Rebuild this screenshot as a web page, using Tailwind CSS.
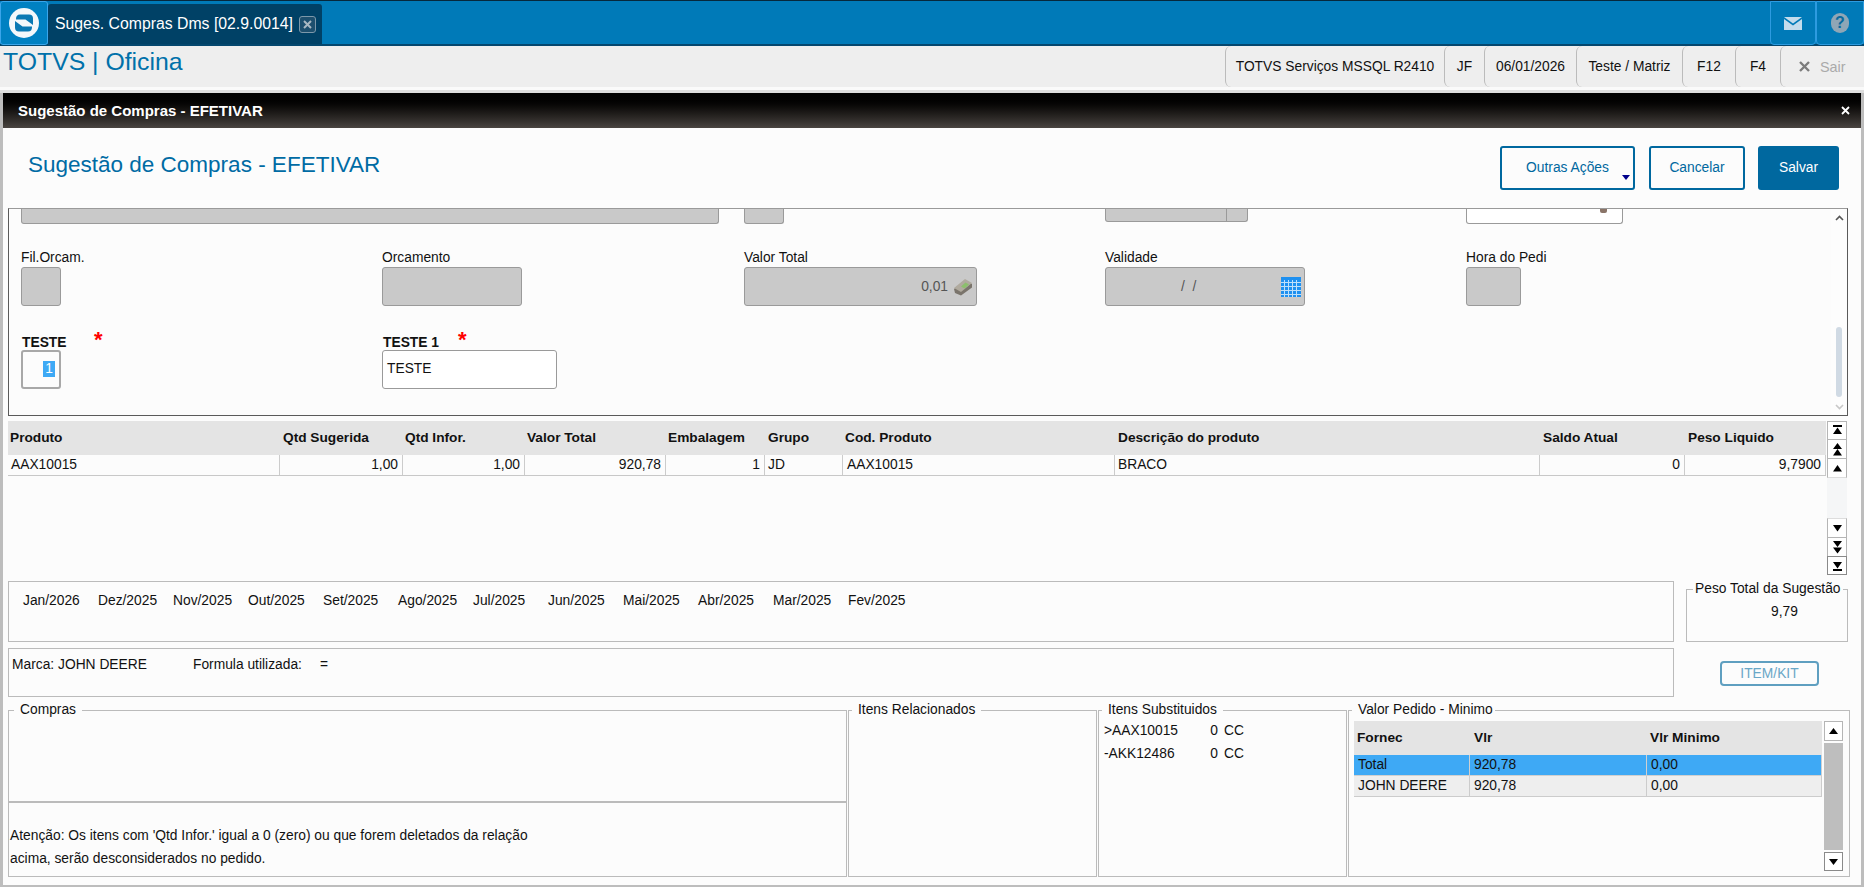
<!DOCTYPE html>
<html lang="pt-BR">
<head>
    <meta charset="UTF-8">
    <title>TOTVS | Oficina</title>
    <script src="https://cdn.jsdelivr.net/npm/@tailwindcss/browser@4"></script>
</head>
<body class="bg-[#bdbdbd] overflow-hidden">
<div class="w-[1864px] h-[887px] flex flex-col overflow-hidden text-[13.8px] leading-[16px] text-[#111] font-['Liberation_Sans',Arial,sans-serif]">

    <!-- Top bar -->
    <div class="h-[46px] shrink-0 flex items-end bg-[#007ab8] border-t border-t-[#06283c] border-b-2 border-b-[#04476e]">
        <div class="w-[48px] h-[44px] -mb-[1px] flex items-center justify-center bg-[#0081c2] border border-[#3aa5ea] rounded-[3px]">
            <svg width="32" height="32" viewBox="0 0 32 32">
                <circle cx="16" cy="16" r="15" fill="#f4f8fb"/>
                <path d="M8 12Q8 7.500 12 7.500L21 7.500Q25 7.500 25 11.500L25 18L17.500 12.500L8 12.500Z" fill="#0a79b4"/>
                <path d="M7 14L14.500 19.500L24 19.500L24 20Q24 24.500 20 24.500L11 24.500Q7 24.500 7 20.500Z" fill="#0a79b4"/>
            </svg>
        </div>
        <div class="w-[274px] h-[40px] flex items-center pl-[7px] bg-[#004166] rounded-t-[3px] text-white text-[15.8px]">
            <span class="whitespace-nowrap">Suges. Compras Dms [02.9.0014]</span>
            <span class="ml-[6px] w-[17px] h-[17px] shrink-0 flex items-center justify-center border border-[#7d98aa] rounded-[3px] bg-[#1d4f6e]">
                <svg width="11" height="11" viewBox="0 0 11 11"><path d="M2 2L9 9M9 2L2 9" stroke="#a9b8c2" stroke-width="2"/></svg>
            </span>
        </div>
        <div class="flex-1"></div>
        <div class="w-[46px] h-[44px] -mb-[1px] flex items-center justify-center bg-[#007ab8] border border-[#2d9be0] rounded-b-[4px]">
            <svg width="18" height="13" viewBox="0 0 18 13"><path d="M0 0H18L9 6.500Z" fill="#c4dcec"/><path d="M0 2L9 8.500L18 2V13H0Z" fill="#c4dcec"/></svg>
        </div>
        <div class="w-[48px] h-[44px] -mb-[1px] flex items-center justify-center bg-[#007ab8] border border-[#2d9be0] rounded-b-[4px]">
            <span class="w-[18px] h-[20px] rounded-full bg-[#8fa6b6] text-[#0a6a9e] font-bold text-[16px] leading-[20px] text-center">?</span>
        </div>
    </div>

    <!-- Toolbar -->
    <div class="h-[41px] shrink-0 flex bg-[#eeeeee]">
        <div class="flex-1 pl-[3px] pt-[2px] text-[24.8px] leading-[28px] text-[#0071aa]">TOTVS | Oficina</div>
        <div class="w-[219px] flex items-center justify-center border-l border-[#bbbbbb] rounded-l-[6px]">TOTVS Serviços MSSQL R2410</div>
        <div class="w-[40px] flex items-center justify-center border-l border-[#bbbbbb] rounded-l-[6px]">JF</div>
        <div class="w-[92px] flex items-center justify-center border-l border-[#bbbbbb] rounded-l-[6px]">06/01/2026</div>
        <div class="w-[106px] flex items-center justify-center border-l border-[#bbbbbb] rounded-l-[6px]">Teste / Matriz</div>
        <div class="w-[53px] flex items-center justify-center border-l border-[#bbbbbb] rounded-l-[6px]">F12</div>
        <div class="w-[45px] flex items-center justify-center border-l border-[#bbbbbb] rounded-l-[6px]">F4</div>
        <div class="w-[84px] flex items-center pl-[18px] gap-[10px] border-l border-[#bbbbbb] rounded-l-[6px] text-[14.4px] text-[#aaaaaa]">
            <svg width="11" height="11" viewBox="0 0 11 11"><path d="M1 1L10 10M10 1L1 10" stroke="#7c7c7c" stroke-width="2.400"/></svg>
            <span>Sair</span>
        </div>
    </div>
    <div class="h-[3px] shrink-0 bg-[#fafafa]"></div>
    <div class="h-[3px] shrink-0 bg-[#dddddd]"></div>

    <!-- Modal -->
    <div class="ml-[3px] w-[1858px] h-[792px] shrink-0 flex flex-col bg-[#fcfcfc]">
        <div class="h-[35px] shrink-0 flex items-center justify-between pl-[15px] pr-[11px] bg-gradient-to-b from-[#000000] to-[#4a4541] text-white font-bold text-[15px]">
            <span>Sugestão de Compras - EFETIVAR</span>
            <svg width="9" height="9" viewBox="0 0 9 9"><path d="M1 1L8 8M8 1L1 8" stroke="#ffffff" stroke-width="1.800"/></svg>
        </div>

        <div class="h-[80px] shrink-0 flex pl-[25px] pt-[18px]">
            <h1 class="flex-1 pt-[6px] text-[22.5px] leading-[26px] text-[#006ba4]">Sugestão de Compras - EFETIVAR</h1>
            <div class="relative w-[135px] h-[44px] flex items-center justify-center border-2 border-[#00689f] rounded-[3px] text-[#00689f]">
                Outras Ações
                <span class="absolute right-[3px] bottom-[8px] w-0 h-0 border-x-[4px] border-x-transparent border-t-[5px] border-t-[#00008b]"></span>
            </div>
            <div class="ml-[14px] w-[96px] h-[44px] flex items-center justify-center border-2 border-[#00689f] rounded-[3px] text-[#00689f]">Cancelar</div>
            <div class="ml-[13px] mr-[22px] w-[81px] h-[44px] flex items-center justify-center bg-[#00689f] rounded-[3px] text-white">Salvar</div>
        </div>

        <!-- Form panel -->
        <div class="ml-[5px] w-[1840px] h-[208px] shrink-0 flex overflow-hidden border border-[#5a5a5a] border-t-[#9a9a9a]">
            <div class="flex-1 pl-[12px]">
                <div class="grid grid-cols-[361px_362px_361px_361px_1fr] h-[15px]">
                    <div class="w-[698px] h-[15px] bg-[#c9c9c9] border-x border-b border-[#9a9a9a] rounded-b-[3px]"></div>
                    <div></div>
                    <div class="w-[40px] h-[15px] bg-[#c9c9c9] border-x border-b border-[#9a9a9a] rounded-b-[3px]"></div>
                    <div class="w-[143px] h-[13px] flex justify-end bg-[#c9c9c9] border-x border-b border-[#9a9a9a] rounded-b-[3px]"><span class="w-[21px] border-l border-[#9a9a9a]"></span></div>
                    <div class="w-[157px] h-[15px] flex justify-end pr-[15px] bg-white border-x border-b border-[#9a9a9a] rounded-b-[3px]">
                        <span class="w-[7px] h-[4px] bg-[#8a7468] rounded-b-[2px]"></span>
                    </div>
                </div>

                <div class="grid grid-cols-[361px_362px_361px_361px_1fr] mt-[26px]">
                    <div>
                        <div class="h-[17px]">Fil.Orcam.</div>
                        <div class="w-[40px] h-[39px] bg-[#c9c9c9] border border-[#9a9a9a] rounded-[3px]"></div>
                    </div>
                    <div>
                        <div class="h-[17px]">Orcamento</div>
                        <div class="w-[140px] h-[39px] bg-[#c9c9c9] border border-[#9a9a9a] rounded-[3px]"></div>
                    </div>
                    <div>
                        <div class="h-[17px]">Valor Total</div>
                        <div class="w-[233px] h-[39px] flex items-center justify-end pr-[3px] gap-[5px] bg-[#c9c9c9] border border-[#9a9a9a] rounded-[3px] text-[#555555]">
                            0,01
                            <svg width="20" height="18" viewBox="0 0 20 18">
                                <path d="M1 11L12 2L19 6L19 9.500L8 17.500L2 15Z" fill="#7a746b"/>
                                <path d="M1 10L12 1L19 5L8 14Z" fill="#b0aa9e"/>
                                <path d="M8 8.500L12.500 4.500L16 6.500L11.500 10.500Z" fill="#8cbf6c"/>
                            </svg>
                        </div>
                    </div>
                    <div>
                        <div class="h-[17px]">Validade</div>
                        <div class="w-[200px] h-[39px] flex items-center pl-[75px] pr-[3px] bg-[#c9c9c9] border border-[#9a9a9a] rounded-[3px] text-[#555555]">
                            <span class="flex-1 whitespace-pre">/  /</span>
                            <svg width="20" height="20" viewBox="0 0 20 20">
                                <rect x="0" y="0" width="20" height="20" fill="#1e90f0"/>
                                <path d="M0 5.500H20M0 9.500H20M0 13.500H20M0 17.500H20M3.500 3V20M7.500 3V20M11.500 3V20M15.500 3V20" stroke="#bfe0fa" stroke-width="1"/>
                            </svg>
                        </div>
                    </div>
                    <div>
                        <div class="h-[17px]">Hora do Pedi</div>
                        <div class="w-[55px] h-[39px] bg-[#c9c9c9] border border-[#9a9a9a] rounded-[3px]"></div>
                    </div>
                </div>

                <div class="grid grid-cols-[361px_1fr] mt-[29px]">
                    <div>
                        <div class="flex h-[15px] font-bold">
                            <span class="w-[73px] pl-[1px]">TESTE</span>
                            <span class="text-[#ff0000] text-[22px] leading-[16px] -mt-[3px]">*</span>
                        </div>
                        <div class="w-[40px] h-[39px] flex items-center justify-end pr-[4px] pb-[1px] bg-[#fcfcfc] border-2 border-[#a8a8a8] rounded-[3px]">
                            <span class="bg-[#3ea9f5] text-white px-[2px]">1</span>
                        </div>
                    </div>
                    <div>
                        <div class="flex h-[15px] font-bold">
                            <span class="w-[76px] pl-[1px]">TESTE 1</span>
                            <span class="text-[#ff0000] text-[22px] leading-[16px] -mt-[3px]">*</span>
                        </div>
                        <div class="w-[175px] h-[39px] flex items-center pl-[4px] pb-[1px] bg-white border border-[#9a9a9a] rounded-[3px]">TESTE</div>
                    </div>
                </div>
            </div>
            <div class="w-[16px] shrink-0 flex flex-col items-center bg-[#fdfdfd]">
                <svg class="mt-[6px]" width="9" height="6" viewBox="0 0 9 6"><path d="M1 5L4.500 1.500L8 5" fill="none" stroke="#555555" stroke-width="1.600"/></svg>
                <div class="mt-[106px] w-[6px] h-[70px] bg-[#d0dae4] rounded-[3px]"></div>
                <svg class="mt-[7px]" width="9" height="6" viewBox="0 0 9 6"><path d="M1 1L4.500 4.500L8 1" fill="none" stroke="#c8c8c8" stroke-width="1.600"/></svg>
            </div>
        </div>

        <!-- Product grid -->
        <div class="ml-[5px] mt-[5px] h-[154px] shrink-0 flex">
            <div class="w-[1818px]">
                <div class="h-[34px] grid grid-cols-[271px_123px_122px_141px_99px_78px_272px_425px_145px_142px] items-center bg-[#e4e4e4] font-bold text-[13.7px]">
                    <span class="pl-[2px]">Produto</span>
                    <span class="pl-[4px]">Qtd Sugerida</span>
                    <span class="pl-[3px]">Qtd Infor.</span>
                    <span class="pl-[3px]">Valor Total</span>
                    <span class="pl-[3px]">Embalagem</span>
                    <span class="pl-[4px]">Grupo</span>
                    <span class="pl-[3px]">Cod. Produto</span>
                    <span class="pl-[4px]">Descrição do produto</span>
                    <span class="pl-[4px]">Saldo Atual</span>
                    <span class="pl-[4px]">Peso Liquido</span>
                </div>
                <div class="h-[21px] grid grid-cols-[272px_123px_122px_141px_99px_78px_272px_425px_145px_141px] items-center bg-[#fcfcfc] border-b border-[#c8c8c8] [&>span]:h-[20px] [&>span]:leading-[20px] [&>span]:border-r [&>span]:border-[#cccccc]">
                    <span class="pl-[3px]">AAX10015</span>
                    <span class="pr-[4px] text-right">1,00</span>
                    <span class="pr-[4px] text-right">1,00</span>
                    <span class="pr-[4px] text-right">920,78</span>
                    <span class="pr-[4px] text-right">1</span>
                    <span class="pl-[3px]">JD</span>
                    <span class="pl-[4px]">AAX10015</span>
                    <span class="pl-[3px]">BRACO</span>
                    <span class="pr-[4px] text-right">0</span>
                    <span class="pr-[4px] text-right">9,7900</span>
                </div>
            </div>
            <div class="ml-[1px] w-[20px] flex flex-col">
                <div class="h-[19px] flex items-center justify-center border border-[#b5b5b5] bg-white">
                    <svg width="11" height="11" viewBox="0 0 11 11"><path d="M1 0H10V2H1ZM5.500 2.500L10 9H1Z" fill="#000"/></svg>
                </div>
                <div class="h-[18px] flex items-center justify-center border-x border-[#b5b5b5] bg-white">
                    <svg width="11" height="13" viewBox="0 0 11 13"><path d="M5.500 0L10 6H1ZM5.500 6L10 12.500H1Z" fill="#000"/></svg>
                </div>
                <div class="h-[20px] flex items-center justify-center border border-[#b5b5b5] border-b-[#dddddd] bg-white">
                    <svg width="11" height="7" viewBox="0 0 11 7"><path d="M5.500 0L10 6.500H1Z" fill="#000"/></svg>
                </div>
                <div class="flex-1 bg-[#f5f6f7]"></div>
                <div class="h-[20px] flex items-center justify-center border border-[#b5b5b5] border-t-[#dddddd] bg-white">
                    <svg width="11" height="7" viewBox="0 0 11 7"><path d="M1 0H10L5.500 6.500Z" fill="#000"/></svg>
                </div>
                <div class="h-[18px] flex items-center justify-center border-x border-[#b5b5b5] bg-white">
                    <svg width="11" height="13" viewBox="0 0 11 13"><path d="M1 0H10L5.500 6ZM1 6.500H10L5.500 12.500Z" fill="#000"/></svg>
                </div>
                <div class="h-[19px] flex items-center justify-center border border-[#8a8a8a] bg-white">
                    <svg width="11" height="11" viewBox="0 0 11 11"><path d="M1 2H10L5.500 8.500ZM1 9H10V11H1Z" fill="#000"/></svg>
                </div>
            </div>
        </div>

        <!-- Months + peso total -->
        <div class="ml-[5px] mt-[6px] h-[61px] shrink-0 flex">
            <div class="w-[1666px] flex items-start pl-[14px] pt-[11px] border border-[#bbbbbb] [&>span]:w-[75px]">
                <span>Jan/2026</span><span>Dez/2025</span><span>Nov/2025</span><span>Out/2025</span><span>Set/2025</span><span>Ago/2025</span><span>Jul/2025</span><span>Jun/2025</span><span>Mai/2025</span><span>Abr/2025</span><span>Mar/2025</span><span>Fev/2025</span>
            </div>
            <fieldset class="ml-[12px] w-[162px] h-[61px] border border-[#bbbbbb]">
                <legend class="ml-[6px] px-[2px] whitespace-nowrap">Peso Total da Sugestão</legend>
                <div class="pl-[84px] pt-[7px]">9,79</div>
            </fieldset>
        </div>

        <!-- Marca -->
        <div class="ml-[5px] mt-[6px] h-[49px] shrink-0 flex">
            <div class="w-[1666px] flex items-start pl-[3px] pt-[8px] border border-[#bbbbbb]">
                <span class="w-[181px]">Marca: JOHN DEERE</span>
                <span class="w-[127px]">Formula utilizada:</span>
                <span>=</span>
            </div>
            <div class="ml-[46px] mt-[13px] w-[99px] h-[25px] flex items-center justify-center border-2 border-[#5f9fc0] rounded-[4px] text-[#6aa7c7]">ITEM/KIT</div>
        </div>

        <!-- Bottom fieldsets -->
        <div class="ml-[5px] mt-[5px] h-[175px] shrink-0 flex">
            <fieldset class="w-[839px] h-[175px] border border-[#bbbbbb]">
                <legend class="ml-[5px] px-[6px]">Compras</legend>
                <div class="h-[83px]"></div>
                <div class="h-[76px] pt-[21px] pl-[1px] leading-[23px] border-t-2 border-[#bbbbbb]">Atenção: Os itens com 'Qtd Infor.' igual a 0 (zero) ou que forem deletados da relação<br>acima, serão desconsiderados no pedido.</div>
            </fieldset>
            <fieldset class="ml-[1px] w-[249px] h-[175px] border border-[#bbbbbb]">
                <legend class="ml-[3px] px-[6px]">Itens Relacionados</legend>
            </fieldset>
            <fieldset class="ml-[1px] w-[249px] h-[175px] border border-[#bbbbbb]">
                <legend class="ml-[3px] px-[6px]">Itens Substituidos</legend>
                <div class="pl-[5px] pt-[1px] leading-[23px]">
                    <div class="flex"><span class="w-[100px]">&gt;AAX10015</span><span class="w-[14px] text-right">0</span><span class="ml-[6px]">CC</span></div>
                    <div class="flex"><span class="w-[100px]">-AKK12486</span><span class="w-[14px] text-right">0</span><span class="ml-[6px]">CC</span></div>
                </div>
            </fieldset>
            <fieldset class="ml-[1px] w-[502px] h-[175px] border border-[#bbbbbb]">
                <legend class="ml-[3px] pl-[6px] pr-[2px]">Valor Pedido - Minimo</legend>
                <div class="flex pl-[5px] pt-[3px]">
                    <div class="w-[468px]">
                        <div class="h-[34px] grid grid-cols-[116px_177px_175px] items-center bg-[#e4e4e4] font-bold text-[13.7px]">
                            <span class="pl-[3px]">Fornec</span><span class="pl-[4px]">Vlr</span><span class="pl-[3px]">Vlr Minimo</span>
                        </div>
                        <div class="h-[21px] grid grid-cols-[116px_177px_175px] bg-[#3ea9f5] border-b border-[#d0d0d0] leading-[20px] [&>span]:border-r [&>span]:border-[#d0d0d0]">
                            <span class="pl-[4px]">Total</span><span class="pl-[4px]">920,78</span><span class="pl-[4px]">0,00</span>
                        </div>
                        <div class="h-[21px] grid grid-cols-[116px_177px_175px] bg-[#eeeeee] border-b border-[#cccccc] leading-[20px] [&>span]:border-r [&>span]:border-[#cccccc]">
                            <span class="pl-[4px]">JOHN DEERE</span><span class="pl-[4px]">920,78</span><span class="pl-[4px]">0,00</span>
                        </div>
                    </div>
                    <div class="ml-[2px] w-[19px] h-[150px] flex flex-col">
                        <div class="h-[20px] flex items-center justify-center border border-[#b5b5b5] bg-white">
                            <svg width="9" height="6" viewBox="0 0 9 6"><path d="M4.500 0L9 6H0Z" fill="#000"/></svg>
                        </div>
                        <div class="mt-[2px] h-[107px] bg-[#bebebe]"></div>
                        <div class="mt-[2px] h-[19px] flex items-center justify-center border border-[#8a8a8a] bg-white">
                            <svg width="9" height="6" viewBox="0 0 9 6"><path d="M0 0H9L4.500 6Z" fill="#000"/></svg>
                        </div>
                    </div>
                </div>
            </fieldset>
        </div>
    </div>
</div>
</body>
</html>
